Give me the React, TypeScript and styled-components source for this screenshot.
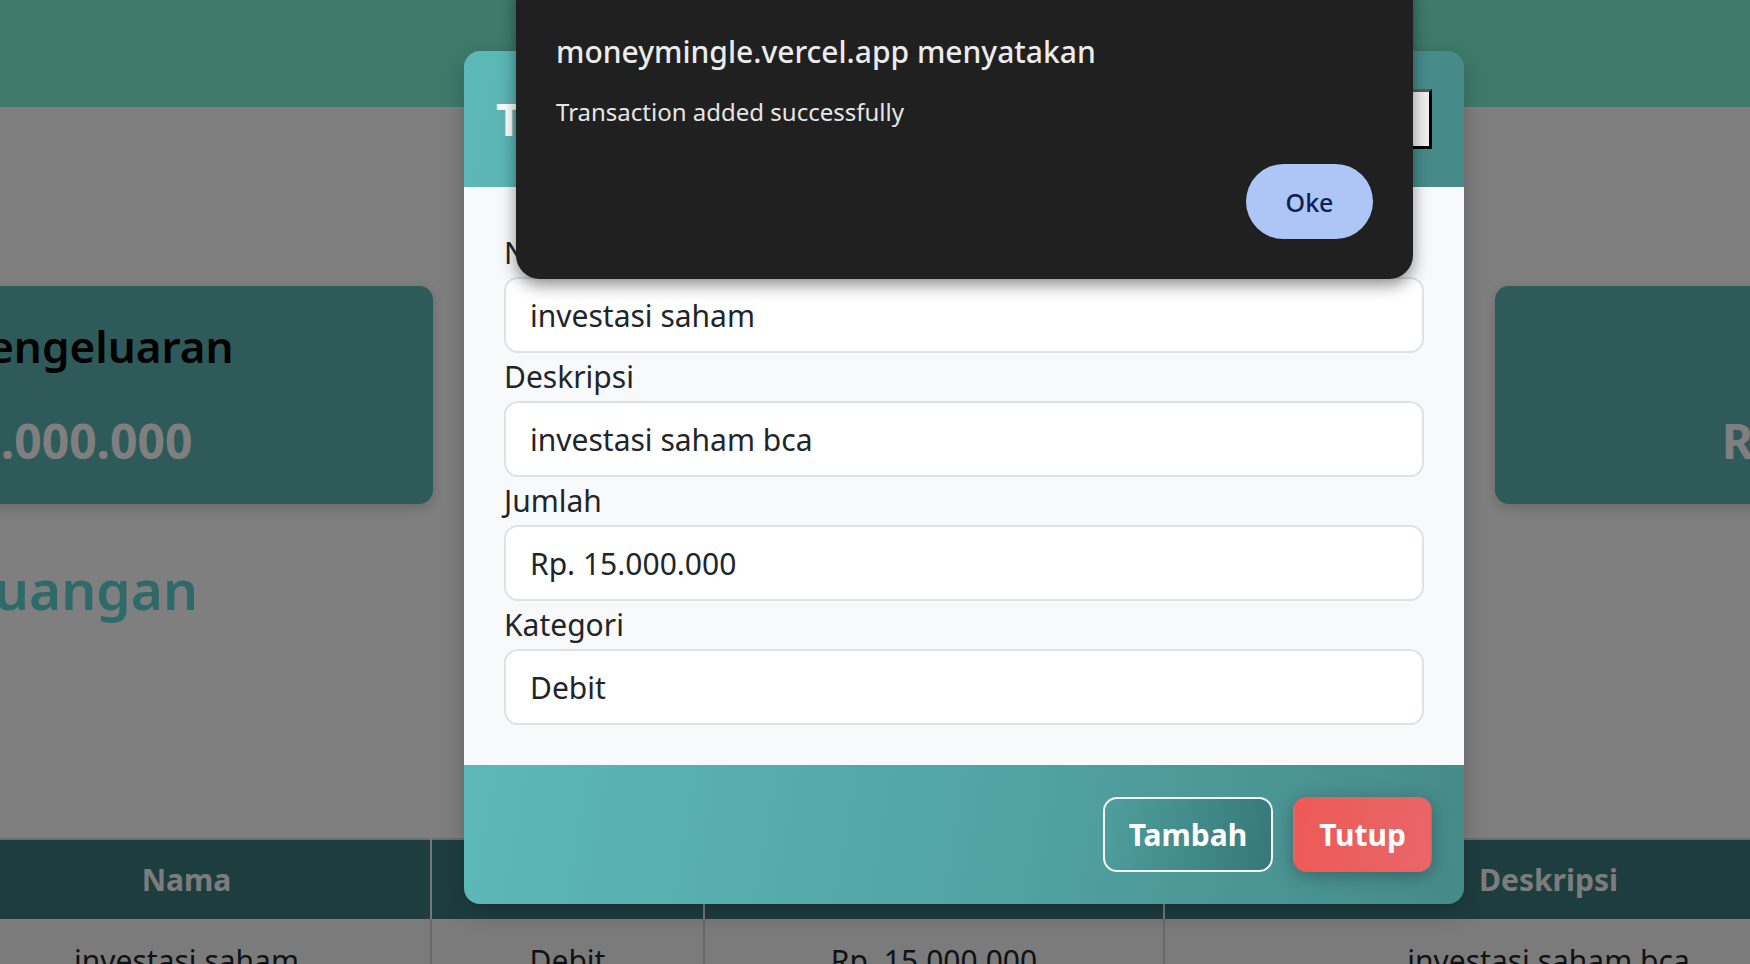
import React from "react";
import styled, { createGlobalStyle } from "styled-components";

const GlobalStyle = createGlobalStyle`
  html, body {
    margin: 0;
    padding: 0;
    width: 1750px;
    height: 964px;
    overflow: hidden;
    background: #ffffff;
  }
  body {
    font-family: "Noto Sans", "Open Sans", sans-serif;
    color: #212529;
  }
  * { box-sizing: border-box; }
`;

const Page = styled.div`
  position: relative;
  width: 1750px;
  height: 964px;
  overflow: hidden;
  background: #ffffff;
`;

const Navbar = styled.header`
  height: 107px;
  background: #7ef4d6;
`;

const Main = styled.main`
  padding-top: 179px;
`;

const CardRow = styled.section`
  display: flex;
  gap: 137px;
  margin-left: -355px;
`;

const StatCard = styled.div`
  flex: 0 0 788px;
  height: 218px;
  background: #5cb4b4;
  border-radius: 14px;
  box-shadow: 0 4px 14px rgba(0, 0, 0, 0.18);
  display: flex;
  flex-direction: column;
  align-items: center;
  padding-top: 34px;
  gap: 40px;
`;

const StatTitle = styled.h3`
  margin: 0;
  font-size: 44px;
  line-height: 53px;
  font-weight: 600;
  color: #000;
  white-space: nowrap;
`;

const StatValue = styled.p`
  margin: 0;
  font-size: 48px;
  line-height: 55px;
  font-weight: 700;
  color: #ffffff;
  white-space: nowrap;
`;

const SectionTitle = styled.h2`
  margin: 52px 0 0 -802px;
  width: 1000px;
  text-align: right;
  white-space: nowrap;
  font-size: 55px;
  line-height: 66px;
  font-weight: 600;
  color: #5bd4d3;
`;

const Table = styled.table`
  margin: 216px 0 0 -57px;
  border-collapse: collapse;
  table-layout: fixed;
  width: 1989px;
  border-top: 2px solid #dcdcdc;
`;

const HeadCell = styled.th`
  height: 80px;
  padding: 0 16px;
  background: #3c7a7e;
  color: #f8f8f8;
  font-size: 30px;
  font-weight: 700;
  text-align: center;
  border-left: 2px solid #f0f0f0;
  &:first-child { border-left: none; }
`;

const BodyCell = styled.td`
  padding: 19px 16px 14px;
  background: #f6f6f6;
  color: #212529;
  font-size: 30px;
  line-height: 45px;
  text-align: center;
  border-left: 2px solid #d2d2d2;
  &:first-child { border-left: none; }
`;

const Backdrop = styled.div`
  position: absolute;
  inset: 0;
  background: rgba(0, 0, 0, 0.5);
`;

const Modal = styled.div`
  position: absolute;
  left: 464px;
  top: 51px;
  width: 1000px;
  border-radius: 16px;
  overflow: hidden;
  box-shadow: 0 8px 24px rgba(0, 0, 0, 0.22);
  display: flex;
  flex-direction: column;
`;

const ModalHeader = styled.div`
  height: 136px;
  padding: 0 32px;
  display: flex;
  align-items: center;
  justify-content: space-between;
  background: linear-gradient(100deg, #5cb8b7 0%, #52a6a5 50%, #458988 100%);
`;

const ModalTitle = styled.h5`
  margin: 0;
  font-size: 44px;
  line-height: 60px;
  font-weight: 700;
  color: #ffffff;
`;

const CloseButton = styled.button`
  width: 60px;
  height: 60px;
  padding: 0;
  background: #f0f0f0;
  border: 3px solid;
  border-color: #5a5a5a #000 #000 #5a5a5a;
  font-size: 30px;
  color: #000;
  font-family: "Noto Sans", sans-serif;
`;

const ModalBody = styled.div`
  padding: 42px 40px 40px;
  background: #f8f9fa;
  display: flex;
  flex-direction: column;
`;

const FieldLabel = styled.label`
  display: block;
  font-size: 30px;
  line-height: 48px;
  color: #212529;
`;

const FieldInput = styled.input`
  display: block;
  width: 100%;
  height: 76px;
  padding: 0 24px;
  border: 2px solid #dee2e6;
  border-radius: 14px;
  background: #ffffff;
  color: #212529;
  font-family: "Noto Sans", "Open Sans", sans-serif;
  font-size: 30px;
  outline: none;
`;

const ModalFooter = styled.div`
  height: 139px;
  padding: 0 32px;
  display: flex;
  align-items: center;
  justify-content: flex-end;
  gap: 20px;
  background: linear-gradient(100deg, #5cb8b7 0%, #52a5a4 50%, #468a89 100%);
`;

const FooterButton = styled.button<{ $variant: "add" | "close" }>`
  height: 75px;
  padding: 0 24px;
  border-radius: 14px;
  border: 2px solid ${(p) => (p.$variant === "add" ? "#f4f4f4" : "transparent")};
  background: ${(p) =>
    p.$variant === "add"
      ? "linear-gradient(100deg, #4e9f9d 0%, #37787a 100%)"
      : "linear-gradient(100deg, #ec5a55 0%, #e96669 100%)"};
  box-shadow: ${(p) => (p.$variant === "close" ? "0 4px 18px rgba(0,0,0,0.28)" : "none")};
  color: #ffffff;
  font-family: "Noto Sans", "Open Sans", sans-serif;
  font-size: 30px;
  font-weight: 700;
`;

const AlertBox = styled.div`
  position: absolute;
  left: 516px;
  top: -24px;
  width: 897px;
  height: 303px;
  padding: 56px 40px 40px;
  background: #202020;
  border-radius: 24px;
  box-shadow: 0 6px 16px rgba(0, 0, 0, 0.45);
  display: flex;
  flex-direction: column;
`;

const AlertTitle = styled.div`
  font-size: 30px;
  line-height: 40px;
  font-weight: 500;
  color: #ececec;
`;

const AlertMessage = styled.div`
  margin-top: 23px;
  font-size: 24px;
  line-height: 34px;
  color: #e6e6e6;
`;

const AlertActions = styled.div`
  margin-top: auto;
  display: flex;
  justify-content: flex-end;
`;

const OkButton = styled.button`
  width: 127px;
  height: 75px;
  border: none;
  border-radius: 38px;
  background: #adc6f6;
  color: #0c2150;
  font-family: "Noto Sans", "Open Sans", sans-serif;
  font-size: 25px;
  font-weight: 500;
`;

const fields = [
  { label: "Nama", value: "investasi saham" },
  { label: "Deskripsi", value: "investasi saham bca" },
  { label: "Jumlah", value: "Rp. 15.000.000" },
  { label: "Kategori", value: "Debit" },
];

export default function App() {
  return (
    <>
      <GlobalStyle />
      <Page>
        <Navbar />
        <Main>
          <CardRow>
            <StatCard>
              <StatTitle>Total Pengeluaran</StatTitle>
              <StatValue>Rp. 5.000.000</StatValue>
            </StatCard>
            <StatCard>
              <StatTitle>Total Pemasukan</StatTitle>
              <StatValue>Rp. 0</StatValue>
            </StatCard>
            <StatCard>
              <StatTitle>Saldo</StatTitle>
              <StatValue>Rp. 10.000.000</StatValue>
            </StatCard>
          </CardRow>
          <SectionTitle>Riwayat Keuangan</SectionTitle>
          <Table>
            <colgroup>
              <col style={{ width: 488 }} />
              <col style={{ width: 273 }} />
              <col style={{ width: 460 }} />
              <col style={{ width: 768 }} />
            </colgroup>
            <thead>
              <tr>
                <HeadCell>Nama</HeadCell>
                <HeadCell>Kategori</HeadCell>
                <HeadCell>Jumlah</HeadCell>
                <HeadCell>Deskripsi</HeadCell>
              </tr>
            </thead>
            <tbody>
              <tr>
                <BodyCell>investasi saham</BodyCell>
                <BodyCell>Debit</BodyCell>
                <BodyCell>Rp. 15.000.000</BodyCell>
                <BodyCell>investasi saham bca</BodyCell>
              </tr>
            </tbody>
          </Table>
        </Main>
        <Backdrop />
        <Modal>
          <ModalHeader>
            <ModalTitle>Tambah Transaksi</ModalTitle>
            <CloseButton>×</CloseButton>
          </ModalHeader>
          <ModalBody>
            {fields.map((f) => (
              <div key={f.label}>
                <FieldLabel>{f.label}</FieldLabel>
                <FieldInput readOnly value={f.value} />
              </div>
            ))}
          </ModalBody>
          <ModalFooter>
            <FooterButton $variant="add">Tambah</FooterButton>
            <FooterButton $variant="close">Tutup</FooterButton>
          </ModalFooter>
        </Modal>
        <AlertBox>
          <AlertTitle>moneymingle.vercel.app menyatakan</AlertTitle>
          <AlertMessage>Transaction added successfully</AlertMessage>
          <AlertActions>
            <OkButton>Oke</OkButton>
          </AlertActions>
        </AlertBox>
      </Page>
    </>
  );
}
